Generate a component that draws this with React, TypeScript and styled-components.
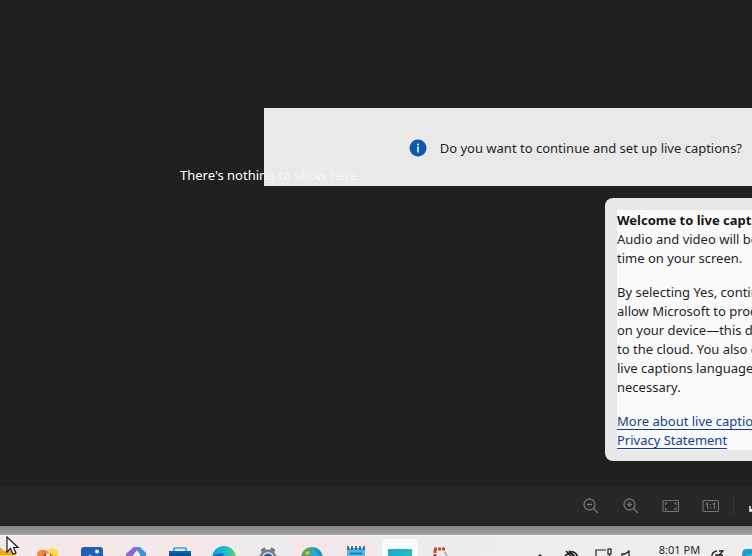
import React from "react";
import styled, { createGlobalStyle } from "styled-components";

const GlobalStyle = createGlobalStyle`
  * { box-sizing: border-box; }
  html, body { margin: 0; background: #202020; overflow: hidden; }
  body { font-family: "Noto Sans", "Open Sans", sans-serif; font-size: 13px; color: #1f1f1f; }
  button { font: inherit; color: inherit; border: 0; padding: 0; margin: 0; background: none; }
  svg { display: block; flex: none; }
`;

const Desktop = styled.div`
  position: relative;
  height: 100vh;
  display: flex;
  flex-direction: column;
  overflow: hidden;
`;

const Viewer = styled.main`
  flex: 1;
  min-height: 0;
  background: #202020;
  padding: 166px 0 0 180px;
`;

const EmptyMessage = styled.p`
  margin: 0;
  line-height: 18px;
  color: #ffffff;
  white-space: nowrap;
`;

const ViewerToolbar = styled.div`
  height: 40px;
  flex: none;
  display: flex;
  align-items: center;
  justify-content: flex-end;
  gap: 12px;
  padding-top: 2px;
  background: #272727;
  border-bottom: 3px solid #232323;
  overflow: hidden;
`;

const ToolGroup = styled.div`
  display: flex;
  gap: 20px;
`;

const ToolButton = styled.button`
  width: 20px;
  height: 20px;
  flex: none;
  display: flex;
  align-items: center;
  justify-content: center;
  color: #747474;
`;

const ToolbarEnd = styled.div`
  display: flex;
  align-items: center;
  gap: 11px;
  width: 19px;
`;

const Divider = styled.span`
  width: 1px;
  height: 18px;
  flex: none;
  background: #383838;
`;

const WindowShadow = styled.div`
  height: 9px;
  flex: none;
  background: linear-gradient(#858585, #939393 60%, #a5a5a5);
`;

const Taskbar = styled.footer`
  height: 21px;
  flex: none;
  display: flex;
  justify-content: space-between;
  background: linear-gradient(90deg, #f4e9e9, #f3e9e9 28%, #ececee 38%, #eeeeee);
  border-top: 1px solid #f5f5f5;
  overflow: hidden;
`;

const AppList = styled.nav`
  display: flex;
  margin-left: -18px;
`;

const AppButton = styled.button<{ $active?: boolean; $alert?: boolean }>`
  width: 36px;
  height: 40px;
  margin: 3px 4px 0;
  padding-top: 7px;
  flex: none;
  display: flex;
  justify-content: center;
  border-radius: 4px;
  background: ${(p) => (p.$active ? "#fbfbfb" : p.$alert ? "#f8e6e7" : "transparent")};
`;

const Tray = styled.div`
  display: flex;
  align-items: flex-start;
  height: 40px;
  margin-right: -24px;
  padding-top: 5px;
`;

const TrayButton = styled.button<{ $width: number }>`
  width: ${(p) => p.$width}px;
  height: 24px;
  padding-top: 7px;
  display: flex;
  justify-content: center;
  flex: none;
  color: #222222;
`;

const Clock = styled.time`
  width: 69px;
  padding-left: 20px;
  font-size: 11px;
  line-height: 18px;
  text-align: center;
  white-space: nowrap;
  color: #262626;
`;

const CaptionBar = styled.section`
  position: absolute;
  top: 108px;
  left: 264px;
  right: 0;
  height: 78px;
  display: flex;
  align-items: center;
  justify-content: flex-end;
  gap: 13px;
  padding-right: 10px;
  background: rgba(245, 245, 245, 0.94);
  border-top: 1px solid #eeeeee;
  white-space: nowrap;
`;

const Prompt = styled.p`
  margin: 0;
  line-height: 20px;
`;

const Flyout = styled.section`
  position: absolute;
  top: 198px;
  left: 605px;
  padding: 12px 12px 11px;
  border-radius: 8px;
  background: #e8e8e8;
`;

const FlyoutBody = styled.div`
  width: 280px;
  display: flex;
  flex-direction: column;
  gap: 15px;
  background: #fafafa;
  line-height: 19px;
  white-space: pre;
`;

const Title = styled.h1`
  margin: 0;
  font-size: 13px;
  line-height: 20px;
  font-weight: 700;
  color: #161616;
`;

const Paragraph = styled.p`
  margin: 0;
`;

const Links = styled.div`
  display: flex;
  flex-direction: column;
  align-items: flex-start;
`;

const TextLink = styled.a`
  color: #153f8c;
  text-decoration: underline;
  text-underline-offset: 3px;
`;

const Cursor = styled.svg`
  position: absolute;
  left: 6px;
  top: 536px;
`;

const MagnifierIcon = ({ plus }: { plus?: boolean }) => (
  <svg width="18" height="18" viewBox="0 0 18 18" fill="none" stroke="currentColor" strokeWidth="1.3">
    <circle cx="7.5" cy="7.5" r="5.5" />
    <path d="M11.5 11.5 16 16M5 7.5h5" />
    {plus && <path d="M7.5 5v5" />}
  </svg>
);

const FitIcon = () => (
  <svg width="18" height="14" viewBox="0 0 18 14" fill="none" stroke="currentColor" strokeWidth="1.1">
    <rect x="1" y="1.5" width="15.5" height="11" rx="1" />
    <path d="M3.5 6V4h2M12 4h2v2M14 8.5v2h-2M5.5 10.5h-2v-2" />
  </svg>
);

const ActualSizeIcon = () => (
  <svg width="18" height="14" viewBox="0 0 18 14" fill="none" stroke="currentColor" strokeWidth="1.1">
    <rect x="1" y="1.5" width="15.5" height="11" rx="1" />
    <path d="M4 5.5 5.5 4v6M11 5.5 12.5 4v6" />
    <path d="M8.5 5v1.3M8.5 8v1.3" />
  </svg>
);

const ExpandIcon = () => (
  <svg width="12" height="12" viewBox="0 0 12 12" fill="none" stroke="#f4f4f4" strokeWidth="1.5">
    <path d="M1 6v5h8M2 10.5l8-8" />
  </svg>
);

const InfoIcon = () => (
  <svg width="18" height="18" viewBox="0 0 18 18">
    <circle cx="9" cy="9" r="8.5" fill="#0d58a8" />
    <circle cx="9" cy="5.5" r="1" fill="#ffffff" />
    <path d="M9 8v5" stroke="#ffffff" strokeWidth="1.5" strokeLinecap="round" />
  </svg>
);

const FolderIcon = () => (
  <svg width="24" height="24" viewBox="0 0 24 24">
    <path d="M0 4q0-2 2-2h7l3 3h9q3 0 3 3v14H0z" fill="#e9a821" />
    <path d="M0 9h24v13H0z" fill="#ffd45c" />
  </svg>
);

const FlowerIcon = () => (
  <svg width="24" height="24" viewBox="0 0 24 24">
    <circle cx="16.5" cy="8" r="6" fill="#ffd84b" />
    <path d="M1 9q0-5 5-5 5-1 7 4l-2 8H2z" fill="#f58a25" />
    <path d="M7 10q0-3 4-3 5 0 6 4l-5 6z" fill="#a642a6" />
    <circle cx="18" cy="15" r="6" fill="#ffb520" />
    <circle cx="12" cy="9" r="2" fill="#fff0cf" />
  </svg>
);

const PhotosIcon = () => (
  <svg width="24" height="24" viewBox="0 0 24 24">
    <rect x="1" y="1" width="22" height="22" rx="3" fill="#2160b4" />
    <circle cx="17" cy="5.5" r="2" fill="#e8f6ff" />
    <path d="M1 18 10 8l13 13v3H1z" fill="#76c8f2" />
  </svg>
);

const HexIcon = () => (
  <svg width="24" height="24" viewBox="0 0 24 24">
    <path d="M2 8 10 1h5l-5 7v13l-8-4z" fill="#6a5cd2" />
    <path d="M10 1h6l6 6v10l-6-4V8z" fill="#3c91df" />
    <path d="M10 1 2 8v6l5-3 3-6 6-4z" fill="#8e69d8" />
    <path d="M2 16 22 9v8l-10 6z" fill="#c26be0" />
    <path d="m9 9 3-3 4 3v5H9z" fill="#f8eff4" />
  </svg>
);

const BriefcaseIcon = () => (
  <svg width="24" height="24" viewBox="0 0 24 24">
    <path d="M6 6V3q0-1 1-1h10q1 0 1 1v3" fill="none" stroke="#2ba2dd" strokeWidth="1.7" />
    <path d="M1 5h22v18H1z" fill="#07539d" />
    <path d="M1 5h22v2H1z" fill="#0865b1" />
  </svg>
);

const EdgeIcon = () => (
  <svg width="24" height="24" viewBox="0 0 24 24">
    <defs>
      <linearGradient id="edge" x1="0" x2="1">
        <stop stopColor="#159ddc" />
        <stop offset="0.6" stopColor="#25bdc7" />
        <stop offset="1" stopColor="#58d263" />
      </linearGradient>
    </defs>
    <circle cx="12" cy="12" r="12" fill="url(#edge)" />
    <path d="M0 12q4-6 12-4l-3 4q-1 7 8 11Q2 26 0 12" fill="#1167bd" />
  </svg>
);

const AssistantIcon = () => (
  <svg width="24" height="24" viewBox="0 0 24 24">
    <path d="M5 1h14q4 0 4 5v12H1V7q0-6 4-6" fill="#1e9bd8" />
    <path d="M1 10q6-5 11-4v12H1z" fill="#3cbd9f" />
  </svg>
);

const GearIcon = () => (
  <svg width="24" height="24" viewBox="0 0 24 24">
    <g stroke="#747c84" strokeWidth="4.5">
      <path d="M1 12h22M6.5 2.5l11 19M17.5 2.5l-11 19" />
    </g>
    <circle cx="12" cy="12" r="8.5" fill="#737b83" />
    <circle cx="12" cy="12" r="6" fill="#dce0e3" />
    <circle cx="12" cy="12" r="4.5" fill="#1261ae" />
  </svg>
);

const GlobeIcon = () => (
  <svg width="24" height="24" viewBox="0 0 24 24">
    <circle cx="12" cy="12" r="11" fill="#24a9cf" />
    <path d="M3 6q5-6 10-3l-2 3-2 3-7 1z" fill="#59a64a" />
    <path d="m5 6 4-1 1 3-4 1z" fill="#edb642" />
    <path d="M14 2q7 2 8 8l-5-3z" fill="#188cc0" />
  </svg>
);

const NotepadIcon = () => (
  <svg width="24" height="24" viewBox="0 0 24 24">
    <rect x="3" y="2" width="18" height="21" rx="2" fill="#4eb5df" />
    <path d="M4 0v4M8 0v4M12 0v4M16 0v4M20 0v4" stroke="#205679" strokeWidth="1.5" />
    <path d="M6 7.500h12M6 12h12" stroke="#167199" strokeWidth="1.3" />
  </svg>
);

const CaptionsIcon = () => (
  <svg width="24" height="24" viewBox="0 0 24 24">
    <defs>
      <linearGradient id="captions" x1="0" x2="1" y2="1">
        <stop stopColor="#20a8d2" />
        <stop offset="1" stopColor="#28c9b5" />
      </linearGradient>
    </defs>
    <rect y="3" width="24" height="18" rx="1" fill="url(#captions)" />
  </svg>
);

const SnippingIcon = () => (
  <svg width="24" height="24" viewBox="0 0 24 24">
    <path d="M2 3h11M3 4v12" stroke="#c64832" strokeWidth="3" strokeDasharray="3 1" fill="none" />
    <path d="M12 6q4 2 2 8l-5 7" stroke="#b4b8bb" strokeWidth="2" fill="none" />
  </svg>
);

const ChevronIcon = () => (
  <svg width="12" height="14" viewBox="0 0 12 14" fill="none" stroke="currentColor" strokeWidth="1.5">
    <path d="m1 12 5-5 5 5" />
  </svg>
);

const CloudOffIcon = () => (
  <svg width="18" height="18" viewBox="0 0 18 18" fill="none" stroke="currentColor" strokeWidth="1.6">
    <path d="M2 10q0-4 4-4 2-4 6-1 2 1 2 3 3 1 2 5H5M3 3l12 12" />
    <path d="m6 3 8 8" strokeWidth="2" />
  </svg>
);

const MonitorIcon = () => (
  <svg width="18" height="18" viewBox="0 0 18 18" fill="none" stroke="currentColor" strokeWidth="1.2">
    <path d="M11 2H1v11h10" />
    <rect x="13" y="1" width="3" height="5" />
    <path d="M14.5 6v7" />
  </svg>
);

const SpeakerIcon = () => (
  <svg width="14" height="16" viewBox="0 0 14 16" fill="none" stroke="currentColor" strokeWidth="1.3">
    <path d="M9 3 5 6H2v6h3l4 3z" />
  </svg>
);

const QuietIcon = () => (
  <svg width="16" height="18" viewBox="0 0 16 18" fill="none" stroke="currentColor" strokeWidth="1.3">
    <path d="M8 3Q2 4 3 10l-1 4h11v-3M6 7h4l-4 4h4M10 3h4l-4 4h4" />
  </svg>
);

const apps = [
  { name: "File Explorer", icon: <FolderIcon /> },
  { name: "Creative app", icon: <FlowerIcon /> },
  { name: "Photos", icon: <PhotosIcon />, alert: true },
  { name: "Microsoft 365", icon: <HexIcon /> },
  { name: "Work tools", icon: <BriefcaseIcon />, alert: true },
  { name: "Edge", icon: <EdgeIcon /> },
  { name: "Settings", icon: <GearIcon /> },
  { name: "Browser", icon: <GlobeIcon />, alert: true },
  { name: "Notepad", icon: <NotepadIcon />, alert: true },
  { name: "Live captions", icon: <CaptionsIcon />, active: true },
  { name: "Snipping Tool", icon: <SnippingIcon /> },
];

export default function App() {
  return (
    <Desktop>
      <GlobalStyle />
      <Viewer>
        <EmptyMessage>There's nothing to show here.</EmptyMessage>
      </Viewer>
      <ViewerToolbar>
        <ToolGroup>
          <ToolButton aria-label="Zoom out"><MagnifierIcon /></ToolButton>
          <ToolButton aria-label="Zoom in"><MagnifierIcon plus /></ToolButton>
          <ToolButton aria-label="Zoom to fit"><FitIcon /></ToolButton>
          <ToolButton aria-label="Actual size"><ActualSizeIcon /></ToolButton>
        </ToolGroup>
        <ToolbarEnd>
          <Divider />
          <ToolButton aria-label="Full screen"><ExpandIcon /></ToolButton>
        </ToolbarEnd>
      </ViewerToolbar>
      <WindowShadow />
      <Taskbar>
        <AppList aria-label="Taskbar">
          {apps.map((app) => (
            <AppButton key={app.name} aria-label={app.name} $active={app.active} $alert={app.alert}>
              {app.icon}
            </AppButton>
          ))}
        </AppList>
        <Tray>
          <TrayButton $width={30} aria-label="Hidden icons"><ChevronIcon /></TrayButton>
          <TrayButton $width={34} aria-label="Offline"><CloudOffIcon /></TrayButton>
          <TrayButton $width={30} aria-label="Display"><MonitorIcon /></TrayButton>
          <TrayButton $width={16} aria-label="Volume"><SpeakerIcon /></TrayButton>
          <Clock>8:01 PM</Clock>
          <TrayButton $width={26} aria-label="Notifications"><QuietIcon /></TrayButton>
          <TrayButton $width={46} aria-label="Assistant"><AssistantIcon /></TrayButton>
        </Tray>
      </Taskbar>

      <CaptionBar>
        <InfoIcon />
        <Prompt>Do you want to continue and set up live captions?</Prompt>
      </CaptionBar>

      <Flyout>
        <FlyoutBody>
          <div>
            <Title>Welcome to live captions</Title>
            <Paragraph>{"Audio and video will be captioned in real\ntime on your screen."}</Paragraph>
          </div>
          <Paragraph>
            {"By selecting Yes, continue, you\nallow Microsoft to process audio\non your device—this data is not sent\nto the cloud. You also consent to\nlive captions language files, if\nnecessary."}
          </Paragraph>
          <Links>
            <TextLink href="#captions">More about live captions</TextLink>
            <TextLink href="#privacy">Privacy Statement</TextLink>
          </Links>
        </FlyoutBody>
      </Flyout>

      <Cursor width="14" height="20" viewBox="0 0 14 20">
        <path d="M1 1v15l3.5-3.5L7 18l3-1-2.5-5.5H12z" fill="#ffffff" stroke="#1a1a1a" strokeWidth="1.2" />
      </Cursor>
    </Desktop>
  );
}
